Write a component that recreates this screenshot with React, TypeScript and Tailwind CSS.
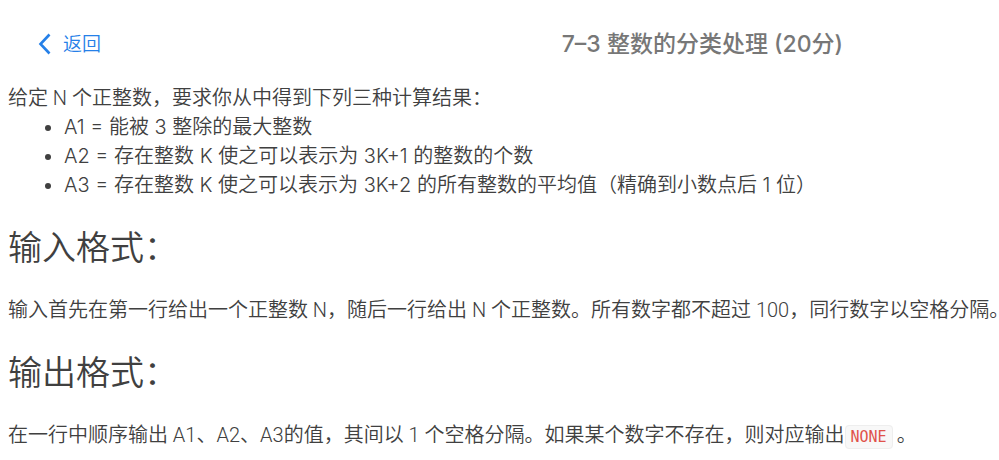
export default function App() {
  return (
    <main className="min-h-screen overflow-x-hidden bg-white pl-2 pt-[28px] font-['Roboto','Noto_Sans_CJK_SC',sans-serif] text-[20px] font-[350] leading-[29px] text-[#404040]">
      <header className="flex h-8 items-center">
        <button type="button" className="ml-[30px] flex items-center gap-3 text-[19px] text-[#2580e8]">
          <svg width="13" height="22" viewBox="0 0 13 22" fill="none" stroke="currentColor" strokeWidth="2.6"><path d="M11.5 1.5L2.5 11L11.5 20.5" /></svg>
          返回
        </button>
        <h1 className="ml-auto mr-[156px] font-['Inter','Noto_Sans_CJK_SC',sans-serif] text-[23px] font-medium text-[#777]">7–3 整数的分类处理 (20分)</h1>
      </header>
      <p className="mt-6">给定 N 个正整数，要求你从中得到下列三种计算结果：</p>
      <ul className="list-disc pl-[56px] font-['Inter','Noto_Sans_CJK_SC',sans-serif]">
        <li>A1 = 能被 3 整除的最大整数</li>
        <li>A2 = 存在整数 K 使之可以表示为 3K+1 的整数的个数</li>
        <li>A3 = 存在整数 K 使之可以表示为 3K+2 的所有整数的平均值（精确到小数点后 1 位）</li>
      </ul>
      <h2 className="mt-6 text-[34px] leading-[48px]">输入格式：</h2>
      <p className="mt-6 whitespace-nowrap">输入首先在第一行给出一个正整数 N，随后一行给出 N 个正整数。所有数字都不超过 100，同行数字以空格分隔。</p>
      <h2 className="mt-6 text-[34px] leading-[48px]">输出格式：</h2>
      <p className="mt-6 whitespace-nowrap">在一行中顺序输出 A1、A2、A3的值，其间以 1 个空格分隔。如果某个数字不存在，则对应输出<code className="mr-1 rounded border border-[#eee] bg-[#f8f8f8] px-[5px] py-[2px] font-['DejaVu_Sans_Mono',monospace] text-[15px] font-normal text-[#e0524a]">NONE</code>。</p>
    </main>
  );
}
